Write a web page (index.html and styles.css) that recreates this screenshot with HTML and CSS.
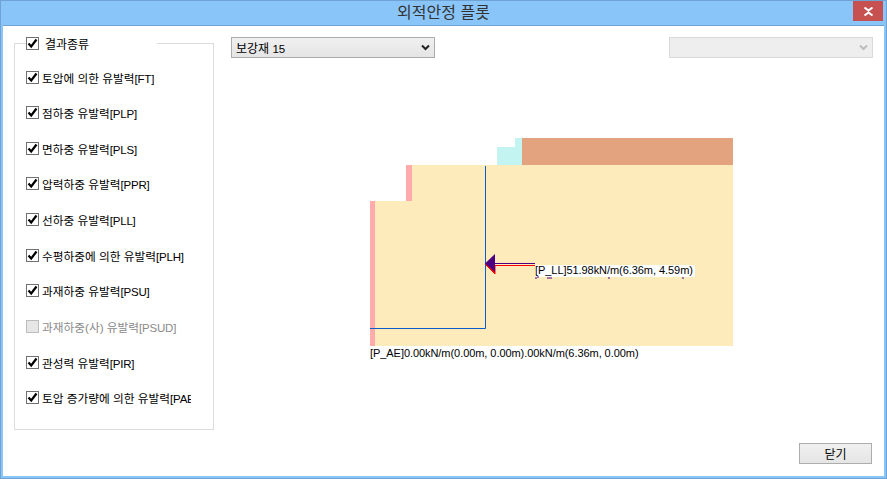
FILE: index.html
```html
<!DOCTYPE html>
<html lang="ko">
<head>
    <meta charset="UTF-8">
    <title>외적안정 플롯</title>
    <link rel="stylesheet" href="styles.css">
</head>
<body>
    <div class="window">
        <div class="titlebar">
            <span class="title">외적안정 플롯</span>
            <button class="close-btn" aria-label="닫기">
                <svg width="11" height="9" viewBox="0 0 11 9"><path class="close-x" d="M1.5 .5 5.5 3.5 9.5 .5M1.5 8.5 5.5 5.5 9.5 8.5"/></svg>
            </button>
        </div>
        <div class="content">
            <fieldset class="result-box">
                <legend class="result-legend">
                    <span class="check on"><svg width="11" height="11" viewBox="0 0 11 11"><path class="tick" d="M1.5 5.5 4.2 8.5 9.5 1.5"/></svg></span>
                    <span>결과종류</span>
                </legend>
                <div class="result-list">
                    <label class="row"><span class="check on"><svg width="11" height="11" viewBox="0 0 11 11"><path class="tick" d="M1.5 5.5 4.2 8.5 9.5 1.5"/></svg></span><span class="row-text">토압에 의한 유발력<span class="code">[FT]</span></span></label>
                    <label class="row"><span class="check on"><svg width="11" height="11" viewBox="0 0 11 11"><path class="tick" d="M1.5 5.5 4.2 8.5 9.5 1.5"/></svg></span><span class="row-text">점하중 유발력<span class="code">[PLP]</span></span></label>
                    <label class="row"><span class="check on"><svg width="11" height="11" viewBox="0 0 11 11"><path class="tick" d="M1.5 5.5 4.2 8.5 9.5 1.5"/></svg></span><span class="row-text">면하중 유발력<span class="code">[PLS]</span></span></label>
                    <label class="row"><span class="check on"><svg width="11" height="11" viewBox="0 0 11 11"><path class="tick" d="M1.5 5.5 4.2 8.5 9.5 1.5"/></svg></span><span class="row-text">압력하중 유발력<span class="code">[PPR]</span></span></label>
                    <label class="row"><span class="check on"><svg width="11" height="11" viewBox="0 0 11 11"><path class="tick" d="M1.5 5.5 4.2 8.5 9.5 1.5"/></svg></span><span class="row-text">선하중 유발력<span class="code">[PLL]</span></span></label>
                    <label class="row"><span class="check on"><svg width="11" height="11" viewBox="0 0 11 11"><path class="tick" d="M1.5 5.5 4.2 8.5 9.5 1.5"/></svg></span><span class="row-text">수평하중에 의한 유발력<span class="code">[PLH]</span></span></label>
                    <label class="row"><span class="check on"><svg width="11" height="11" viewBox="0 0 11 11"><path class="tick" d="M1.5 5.5 4.2 8.5 9.5 1.5"/></svg></span><span class="row-text">과재하중 유발력<span class="code">[PSU]</span></span></label>
                    <label class="row disabled"><span class="check"></span><span class="row-text">과재하중(사) 유발력<span class="code">[PSUD]</span></span></label>
                    <label class="row"><span class="check on"><svg width="11" height="11" viewBox="0 0 11 11"><path class="tick" d="M1.5 5.5 4.2 8.5 9.5 1.5"/></svg></span><span class="row-text">관성력 유발력<span class="code">[PIR]</span></span></label>
                    <label class="row"><span class="check on"><svg width="11" height="11" viewBox="0 0 11 11"><path class="tick" d="M1.5 5.5 4.2 8.5 9.5 1.5"/></svg></span><span class="row-text">토압 증가량에 의한 유발력<span class="code">[PAE]</span></span></label>
                </div>
            </fieldset>
            <div class="right-col">
                <div class="toolbar">
                    <div class="combo">
                        <span>보강재 <span class="code">15</span></span>
                        <svg width="9" height="7" viewBox="0 0 9 7"><path class="chev" d="M1 1.5 4.5 5 8 1.5"/></svg>
                    </div>
                    <div class="combo combo-off">
                        <svg width="9" height="7" viewBox="0 0 9 7"><path class="chev" d="M1 1.5 4.5 5 8 1.5"/></svg>
                    </div>
                </div>
                <svg class="plot" width="642" height="385" viewBox="231 58 642 385">
                    <path class="soil" d="M375 201H412V165H733V346H375Z"/>
                    <rect class="wall" x="370" y="201" width="5" height="145"/>
                    <rect class="wall" x="406" y="165" width="6" height="36"/>
                    <path class="cyan" d="M497 147H515V138H522V165H497Z"/>
                    <rect class="clay" x="522" y="138" width="211" height="27"/>
                    <path class="blue-line" d="M485.5 166V328.5H370"/>
                    <path class="force-red" d="M495 265.5H535M485 264 495 274V266Z"/>
                    <path class="force" d="M495 263.5H535"/>
                    <path class="arrow-head" d="M485 263.5 495 254V272Z"/>
                    <rect class="label-bg" x="535" y="265" width="160" height="12"/>
                    <path class="force" d="M536 277v2M537 277h2M547 278h5M609 277v2M683 277v2"/>
                    <text class="plot-text" x="535" y="274">[P_LL]51.98kN/m(6.36m, 4.59m)</text>
                    <text class="plot-text" x="370" y="357">[P_AE]0.00kN/m(0.00m, 0.00m).00kN/m(6.36m, 0.00m)</text>
                </svg>
                <div class="footer">
                    <button class="close-action">닫기</button>
                </div>
            </div>
        </div>
    </div>
</body>
</html>
```

FILE: styles.css
```css
body{
    margin: 0;
    background-color: #ffffff;
}

.window{
    box-sizing: border-box;
    width: 887px;
    height: 479px;
    background-color: #ffffff;
    border: solid #8ac5fa;
    border-width: 0 3px 3px 3px;
    font-family: "Liberation Sans", "Noto Sans CJK KR", sans-serif;
    font-size: 12px;
    color: #000000;
    outline: 1px solid #6fa3d6;
    outline-offset: -1px;
    overflow: hidden;
}

.titlebar{
    display: flex;
    align-items: flex-start;
    justify-content: center;
    height: 26px;
    margin: 0 -3px;
    padding-top: 1px;
    box-sizing: border-box;
    background-color: #8ac5fa;
    border-top: 1px solid #6fa3d6;
    border-bottom: 1px solid #6fa3d6;
    position: relative;
}

.title{
    font-size: 16px;
    line-height: 22px;
    color: #333333;
}

.close-btn{
    position: absolute;
    top: 0;
    right: 4px;
    width: 30px;
    height: 20px;
    padding: 0;
    border: none;
    background-color: #c75050;
    display: flex;
    align-items: center;
    justify-content: center;
}

.close-x{
    fill: none;
    stroke: #ffffff;
    stroke-width: 2;
}

.content{
    display: flex;
    align-items: flex-start;
}

.result-box{
    box-sizing: border-box;
    width: 200px;
    margin: 10px 0 0 11px;
    padding: 20px 0 24px 11px;
    border: 1px solid #dcdcdc;
    min-width: 0;
}

.result-legend{
    display: flex;
    align-items: center;
    width: 131px;
    height: 14px;
    padding: 0;
    box-sizing: border-box;
    background-color: #ffffff;
    gap: 6px;
}

.result-list{
    display: flex;
    flex-direction: column;
    gap: 21.67px;
}

.row{
    display: flex;
    align-items: center;
    height: 14px;
    gap: 3px;
}

.row-text{
    white-space: nowrap;
    overflow: hidden;
    width: 149px;
    font-size: 11.7px;
}

.code{
    font-size: 11.5px;
    letter-spacing: -0.2px;
}

.disabled{
    color: #8a8a8a;
}

.check{
    box-sizing: border-box;
    flex: none;
    width: 13px;
    height: 13px;
    border: 1px solid #bcbcbc;
    background-color: #e6e6e6;
    display: flex;
}

.check.on{
    border-color: #707070;
    background-color: #ffffff;
}

.tick{
    fill: none;
    stroke: #000000;
    stroke-width: 2.2;
}

.right-col{
    display: flex;
    flex-direction: column;
    width: 642px;
    margin-left: 17px;
}

.toolbar{
    display: flex;
    justify-content: space-between;
    margin-top: 11px;
}

.combo{
    box-sizing: border-box;
    display: flex;
    align-items: center;
    justify-content: space-between;
    width: 204px;
    height: 21px;
    padding: 0 4px 0 4px;
    border: 1px solid #acacac;
    background: linear-gradient(#f0f0f0, #e5e5e5);
}

.chev{
    fill: none;
    stroke: #222222;
    stroke-width: 2;
}

.combo-off{
    justify-content: flex-end;
    border-color: #d9d9d9;
    background: #eeeeee;
}

.combo-off .chev{
    stroke: #bcbcbc;
}

.plot{
    display: block;
}

.soil{
    fill: #feebbb;
}

.wall{
    fill: #ffabab;
}

.cyan{
    fill: #c3f4f2;
}

.clay{
    fill: #e4a37f;
}

.blue-line{
    fill: none;
    stroke: #0a5cc8;
}

.force{
    fill: none;
    stroke: #4b0082;
}

.force-red{
    fill: #ff0000;
    stroke: #ff0000;
    stroke-width: 1;
}

.arrow-head{
    fill: #4b0082;
}

.label-bg{
    fill: #ffffff;
}

.plot-text{
    font-family: "Liberation Sans", sans-serif;
    font-size: 11px;
    letter-spacing: -0.06px;
    fill: #000000;
}

.footer{
    display: flex;
    justify-content: flex-end;
    padding-right: 1px;
}

.close-action{
    box-sizing: border-box;
    width: 73px;
    height: 21px;
    padding: 0;
    border: 1px solid #adadad;
    background: linear-gradient(#f0f0f0, #e5e5e5);
    font-family: "Liberation Sans", "Noto Sans CJK KR", sans-serif;
    font-size: 12px;
    color: #000000;
}
```
